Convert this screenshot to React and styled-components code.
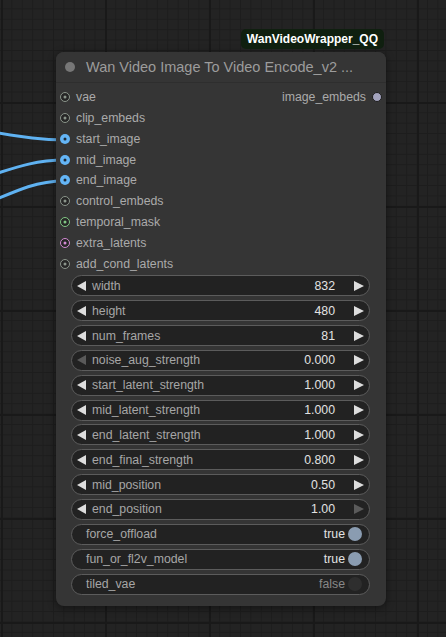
import React from 'react';
import styled, { createGlobalStyle } from 'styled-components';

const GlobalStyle = createGlobalStyle`
  html, body {
    margin: 0;
    padding: 0;
    background: #222;
  }
  * {
    box-sizing: border-box;
  }
`;

const Canvas = styled.div`
  position: relative;
  width: 446px;
  height: 637px;
  overflow: hidden;
  font-family: 'Liberation Sans', Arial, sans-serif;
  background-color: #232323;
  background-image:
    linear-gradient(to right, #191919 2px, transparent 2px),
    linear-gradient(to bottom, #191919 2px, transparent 2px),
    linear-gradient(to right, #1d1d1d 1px, transparent 1px),
    linear-gradient(to bottom, #1d1d1d 1px, transparent 1px);
  background-size: 104px 104px, 104px 104px, 10.4px 10.4px, 10.4px 10.4px;
  background-position: 1px 0, 0 -2px, 1px 0, 0 -2px;
`;

const Wires = styled.svg`
  position: absolute;
  left: 0;
  top: 0;
  pointer-events: none;
`;

const Node = styled.div`
  position: absolute;
  left: 56px;
  top: 52px;
  width: 330px;
  background: #353535;
  border-radius: 8px;
  box-shadow: 0 2px 8px rgba(0, 0, 0, 0.45);
  padding-bottom: 11px;
`;

const Badge = styled.div`
  position: absolute;
  right: 2px;
  bottom: calc(100% + 3px);
  height: 20px;
  padding: 0 6px;
  display: flex;
  align-items: center;
  background: #0f1f0f;
  border-radius: 5px;
  color: #fff;
  font-size: 12px;
  font-weight: bold;
`;

const TitleBar = styled.div`
  height: 31px;
  display: flex;
  align-items: center;
  gap: 11px;
  padding-left: 9px;
  background: #353535;
  border-bottom: 1px solid #2e2e2e;
  border-radius: 8px 8px 0 0;
`;

const TitleDot = styled.span`
  width: 10px;
  height: 10px;
  border-radius: 50%;
  background: #777;
`;

const Title = styled.span`
  color: #9c9c9c;
  font-size: 14.5px;
  white-space: nowrap;
`;

const Slots = styled.div`
  padding-top: 4px;
  display: flex;
  flex-direction: column;
`;

const SlotRow = styled.div`
  height: 20.78px;
  display: flex;
  align-items: center;
  padding: 0 4px;
  color: #aaa;
  font-size: 12.3px;
`;

const Socket = styled.span`
  position: relative;
  width: 10px;
  height: 10px;
  flex: none;
  border-radius: 50%;
  background: ${p => (p.$linked ? p.$color : '#262626')};
  border: ${p => (p.$linked ? 'none' : `1.5px solid ${p.$color}`)};

  &::after {
    content: '';
    position: absolute;
    left: 50%;
    top: 50%;
    width: 3px;
    height: 3px;
    transform: translate(-50%, -50%);
    border-radius: 50%;
    background: ${p => (p.$linked ? '#1e2a36' : p.$color)};
  }
`;

const SlotLabel = styled.span`
  margin-left: 6px;
  flex: 1;
`;

const OutLabel = styled.span`
  margin-right: 6px;
`;

const OutSocket = styled.span`
  width: 10px;
  height: 10px;
  border-radius: 50%;
  background: #a3a3bd;
  border: 1.5px solid #1c1c1c;
`;

const Widgets = styled.div`
  display: flex;
  flex-direction: column;
  gap: 3.85px;
  padding: 1.5px 16px 0 15px;
`;

const Widget = styled.div`
  height: 21px;
  display: flex;
  align-items: center;
  background: #222;
  border: 1px solid #5c5c5c;
  border-radius: 11px;
  font-size: 12.3px;
  padding: 0 ${p => (p.$toggle ? 7 : 5)}px 0 ${p => (p.$toggle ? 14 : 5)}px;
`;

const Arrow = styled.span`
  width: 0;
  height: 0;
  flex: none;
  border-top: 5px solid transparent;
  border-bottom: 5px solid transparent;
  ${p =>
    p.$dir === 'left'
      ? `border-right: 9px solid ${p.$dim ? '#5a5a5a' : '#ddd'};`
      : `border-left: 10px solid ${p.$dim ? '#5a5a5a' : '#ddd'};`}
`;

const WidgetLabel = styled.span`
  flex: 1;
  color: #a6a6a6;
  margin-left: ${p => (p.$toggle ? 0 : 6)}px;
  white-space: nowrap;
`;

const WidgetValue = styled.span`
  color: ${p => (p.$off ? '#888' : '#e2e2e2')};
  margin-right: ${p => (p.$toggle ? 3 : 19)}px;
`;

const Knob = styled.span`
  width: 14px;
  height: 14px;
  border-radius: 50%;
  background: ${p => (p.$on ? '#8a9cb1' : '#2e2e2e')};
`;

const inputs = [
  { name: 'vae', color: '#8b958b' },
  { name: 'clip_embeds', color: '#8b958b' },
  { name: 'start_image', color: '#64b5f6', linked: true },
  { name: 'mid_image', color: '#64b5f6', linked: true },
  { name: 'end_image', color: '#64b5f6', linked: true },
  { name: 'control_embeds', color: '#8b958b' },
  { name: 'temporal_mask', color: '#81c784' },
  { name: 'extra_latents', color: '#d48ad4' },
  { name: 'add_cond_latents', color: '#8b958b' },
];

const numbers = [
  { name: 'width', value: '832' },
  { name: 'height', value: '480' },
  { name: 'num_frames', value: '81' },
  { name: 'noise_aug_strength', value: '0.000', atMin: true },
  { name: 'start_latent_strength', value: '1.000' },
  { name: 'mid_latent_strength', value: '1.000' },
  { name: 'end_latent_strength', value: '1.000' },
  { name: 'end_final_strength', value: '0.800' },
  { name: 'mid_position', value: '0.50' },
  { name: 'end_position', value: '1.00', atMax: true },
];

const toggles = [
  { name: 'force_offload', on: true },
  { name: 'fun_or_fl2v_model', on: true },
  { name: 'tiled_vae', on: false },
];

function Links() {
  const wire = { fill: 'none', stroke: '#5fb2f2', strokeWidth: 3 };
  return (
    <Wires width="446" height="637">
      <path d="M -60 124 C 10 134, 30 140, 65 140" {...wire} />
      <path d="M -40 185 C 20 166, 35 160, 65 160" {...wire} />
      <path d="M -40 215 C 20 189, 35 181, 65 181" {...wire} />
    </Wires>
  );
}

export default function App() {
  return (
    <>
      <GlobalStyle />
      <Canvas>
        <Links />
        <Node>
          <Badge>WanVideoWrapper_QQ</Badge>
          <TitleBar>
            <TitleDot />
            <Title>Wan Video Image To Video Encode_v2 ...</Title>
          </TitleBar>
          <Slots>
            {inputs.map((s, i) => (
              <SlotRow key={s.name}>
                <Socket $color={s.color} $linked={s.linked} />
                <SlotLabel>{s.name}</SlotLabel>
                {i === 0 && (
                  <>
                    <OutLabel>image_embeds</OutLabel>
                    <OutSocket />
                  </>
                )}
              </SlotRow>
            ))}
          </Slots>
          <Widgets>
            {numbers.map(w => (
              <Widget key={w.name}>
                <Arrow $dir="left" $dim={w.atMin} />
                <WidgetLabel>{w.name}</WidgetLabel>
                <WidgetValue>{w.value}</WidgetValue>
                <Arrow $dir="right" $dim={w.atMax} />
              </Widget>
            ))}
            {toggles.map(t => (
              <Widget key={t.name} $toggle>
                <WidgetLabel $toggle>{t.name}</WidgetLabel>
                <WidgetValue $toggle $off={!t.on}>
                  {t.on ? 'true' : 'false'}
                </WidgetValue>
                <Knob $on={t.on} />
              </Widget>
            ))}
          </Widgets>
        </Node>
      </Canvas>
    </>
  );
}
